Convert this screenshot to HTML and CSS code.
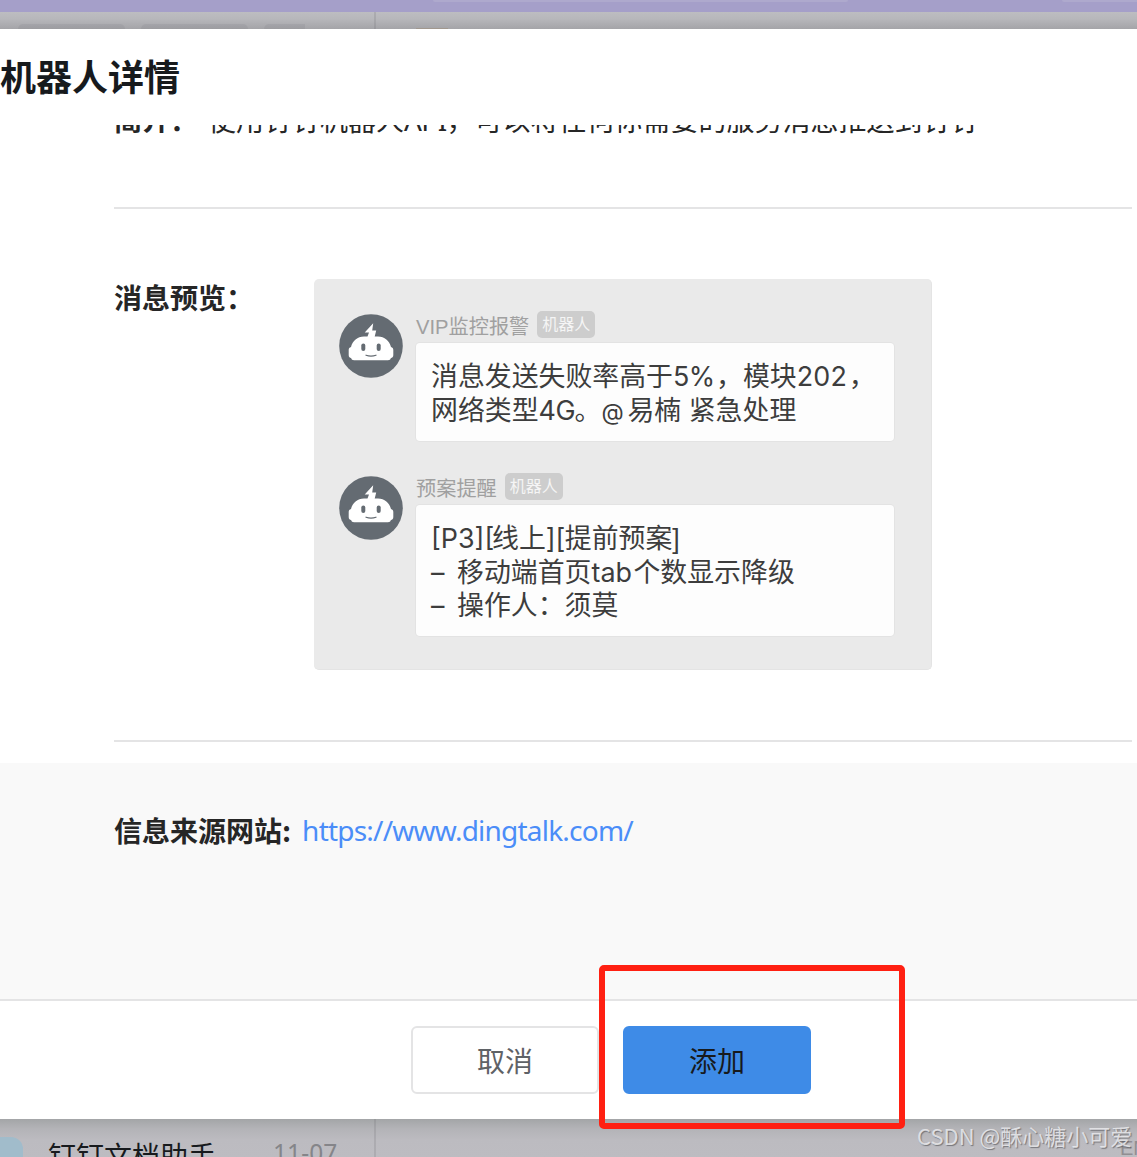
FILE: index.html
```html
<!DOCTYPE html>
<html lang="zh-CN">
<head>
<meta charset="utf-8">
<title>机器人详情</title>
<link rel="stylesheet" href="styles.css">
</head>
<body>
<svg class="symbols" aria-hidden="true">
  <symbol id="robot" viewBox="0 0 64 64">
    <circle cx="32" cy="32" r="31.8" fill="#646b72"/>
    <path fill="#fff" d="M34.200 9.300 25.700 18.600h4.300L28.500 22.500H25C18.500 22.500 13.500 27 12 33c-1.500.4-2.300 1.400-2.300 3v5c0 1.700.8 2.800 2.400 3 .4 1.500 1.300 2.200 3 2.200h33.800c1.700 0 2.600-.7 3-2.200 1.600-.2 2.400-1.300 2.400-3v-5c0-1.600-.8-2.600-2.300-3C50.500 27 45.500 22.500 39 22.500h-3.300L37.200 16.500h-4z"/>
    <rect x="22.300" y="29.500" width="4" height="7.400" rx="2" fill="#646b72"/>
    <rect x="37.700" y="29.500" width="4" height="7.400" rx="2" fill="#646b72"/>
    <path d="M27 41.200q5 1.700 10 0" fill="none" stroke="#646b72" stroke-width="1.200" stroke-linecap="round"/>
  </symbol>
</svg>
<div class="app">
  <div class="titlebar"><span class="search"></span><span class="tools"></span></div>
  <div class="backdrop-top"><div class="chips"><i class="chip"></i><i class="chip"></i><i class="chip chip-short"></i></div><i class="sliver"></i></div>

  <section class="dialog">
    <header class="head"><h1>机器人详情</h1></header>
    <div class="body">
      <div class="row intro"><b>简介：</b><span>使用钉钉机器人<em>API</em>，可以将任何你需要的服务消息推送到钉钉</span></div>
      <div class="row preview">
        <b>消息预览：</b>
        <div class="card">
          <div class="msg">
            <svg class="avatar"><use href="#robot"/></svg>
            <div class="content">
              <div class="who"><span>VIP监控报警</span><span class="tag">机器人</span></div>
              <div class="bubble"><p>消息发送失败率高于<span class="percent">5%</span>，模块<span class="number">202</span>，</p><p>网络类型<span class="net">4G</span>。<span class="at">@</span>易楠 紧急处理</p></div>
            </div>
          </div>
          <div class="msg">
            <svg class="avatar"><use href="#robot"/></svg>
            <div class="content">
              <div class="who"><span>预案提醒</span><span class="tag">机器人</span></div>
              <div class="bubble"><p><span class="level">[P3][</span>线上<span class="joint">][</span>提前预案]</p><p><span class="dash">–</span>移动端首页<span class="tab">tab</span>个数显示降级</p><p><span class="dash">–</span>操作人：须莫</p></div>
            </div>
          </div>
        </div>
      </div>
      <div class="source"><b>信息来源网站:</b><a>https://www.dingtalk.com/</a></div>
    </div>
    <footer class="foot"><button class="btn">取消</button><button class="btn primary">添加</button></footer>
  </section>

  <div class="backdrop-bottom">
    <div class="chat"><i class="chat-icon"></i><span class="chat-name">钉钉文档助手</span><time>11-07</time></div>
    <span class="corner">EN</span>
  </div>
  <div class="highlight"></div>
  <div class="watermark">CSDN @酥心糖小可爱</div>
</div>
</body>
</html>
```
FILE: styles.css
```css
* { box-sizing: border-box; }
body { margin: 0; overflow: hidden; font-family: "Noto Sans", "Noto Sans CJK SC", sans-serif; color: #262626; }
h1, p { margin: 0; }
.symbols { position: absolute; width: 0; height: 0; }
.app { position: relative; display: flex; flex-direction: column; height: 1157px; overflow: hidden; background: #fff; }

.titlebar { height: 12px; flex: none; display: flex; background: #a59fc9; }
.search, .tools { height: 2px; background: #aea9cd; }
.search { width: 415px; margin-left: 433px; border-radius: 0 0 4px 4px; }
.tools { width: 75px; margin-left: 214px; border-radius: 0 0 0 4px; }

.backdrop-top { height: 17px; flex: none; display: flex; align-items: flex-end; background: linear-gradient(#bdbdc1, #b7b7bb 40%, #a4a4a8); }
.chips { width: 376px; height: 17px; display: flex; align-items: flex-end; gap: 16px; padding-left: 18px; border-right: 2px solid rgba(100, 100, 105, .18); }
.chip { width: 107px; height: 5px; border-radius: 6px 6px 0 0; background: rgba(90, 90, 95, .1); }
.chip-short { width: 41px; border-radius: 6px 0 0 0; }
.sliver { width: 32px; height: 1px; margin-left: 40px; background: #a1988f; }

.dialog { height: 1090px; flex: none; display: flex; flex-direction: column; background: #fff; }
.head { height: 96px; flex: none; padding-top: 20px; }
.head h1 { font: 700 36px/52px "Noto Sans CJK SC", sans-serif; color: #171a1d; white-space: nowrap; }
.body { height: 874px; flex: none; overflow: hidden; display: flex; flex-direction: column; font-size: 28px; }
.row { margin: 0 5px 0 114px; flex: none; display: flex; border-bottom: 2px solid #e4e4e5; }
.row b, .source b { font-family: "Noto Sans CJK SC", sans-serif; font-weight: 700; white-space: nowrap; }
.intro { height: 110px; margin-top: -26px; line-height: 40px; font-family: "Noto Sans CJK SC", sans-serif; }
.intro b { width: 94px; }
.intro span { white-space: nowrap; }
.intro em { font: 400 28px/1 "Noto Sans", sans-serif; letter-spacing: -.6px; }
.preview { height: 533px; padding-top: 70px; line-height: 40px; }
.preview > b { width: 200px; margin-top: -2px; }

.card { width: 618px; height: 391px; padding: 32px 0 0 25px; border: 1px solid #e4e4e4; border-width: 0 1px 1px 0; border-radius: 5px; background: #eaeaea; font-family: "Liberation Sans", "Noto Sans CJK SC", sans-serif; }
.msg { display: flex; align-items: flex-start; margin-bottom: 32px; }
.avatar { width: 64px; height: 64px; margin: 3px 13px 0 0; flex: none; }
.content { width: 478px; }
.who { height: 32px; display: flex; align-items: flex-start; gap: 8px; font-size: 20.2px; line-height: 32px; color: #a0a0a0; white-space: nowrap; }
.tag { width: 58px; height: 27px; border-radius: 5px; background: #cdcdcd; color: #f5f5f5; font-size: 16px; line-height: 28px; text-align: center; }
.bubble { height: 98px; padding: 18px 0 0 15px; border-radius: 4px; background: #fdfdfd; box-shadow: 0 0 0 1px #e3e3e3; color: #3d3d3d; font-size: 26.9px; line-height: 33.5px; white-space: nowrap; }
.msg:last-child .bubble { height: 131px; }
.bubble span { display: inline-block; font-family: "Inter", sans-serif; line-height: 1; }
.percent { width: 43px; letter-spacing: -.5px; }
.number { width: 52px; letter-spacing: .2px; }
.net { width: 36px; letter-spacing: -.5px; }
.at { width: 26px; font-size: 23px; }
.level { width: 61px; }
.joint { width: 19px; }
.tab { width: 42px; }
.dash { width: 26px; }

.source { height: 236px; flex: none; margin-top: 21px; padding: 47px 0 0 114px; display: flex; background: #f9f9f9; line-height: 40px; }
.source a { margin-left: 11px; color: #4b8df8; letter-spacing: -.78px; white-space: nowrap; }
.foot { height: 120px; flex: none; display: flex; gap: 24px; padding: 25px 0 0 411px; border-top: 2px solid #e4e4e5; }
.btn { width: 188px; height: 68px; padding: 0; border: 2px solid #e4e4e5; border-radius: 6px; background: #fff; color: #5f6266; font: 400 28px/64px "Noto Sans CJK SC", sans-serif; }
.primary { border-color: #3e8be7; background: #3e8be7; color: #171a1d; }

.backdrop-bottom { height: 38px; flex: none; display: flex; justify-content: space-between; overflow: hidden; background: linear-gradient(#a3a5a7, #b3b3b7 25%, #bcbbc0 55%, #bdbcc1); }
.chat { width: 376px; height: 38px; display: flex; border-right: 2px solid rgba(100, 100, 105, .18); font-size: 28px; line-height: 40px; white-space: nowrap; }
.chat-icon { width: 23px; height: 40px; margin-top: 18px; border-radius: 0 12px 0 0; background: #a1bccb; }
.chat-name { width: 225px; margin: 16px 0 0 25px; color: #171a1d; font-family: "Noto Sans CJK SC", sans-serif; }
.chat time { margin-top: 14px; color: #858589; font-size: 24.5px; letter-spacing: .1px; }
.corner { width: 17px; margin-top: 18px; color: #918e92; font: 20px/22px "Liberation Sans", sans-serif; overflow: hidden; }

.highlight { position: absolute; left: 599px; top: 965px; width: 306px; height: 164px; border: 6px solid #ff2012; border-radius: 5px; }
.watermark { position: absolute; left: 917px; top: 1119px; font: 22px/32px "Noto Sans CJK SC", sans-serif; color: rgba(235, 235, 238, .85); text-shadow: 1px 1px 1px rgba(80, 80, 85, .65); white-space: nowrap; }
```
